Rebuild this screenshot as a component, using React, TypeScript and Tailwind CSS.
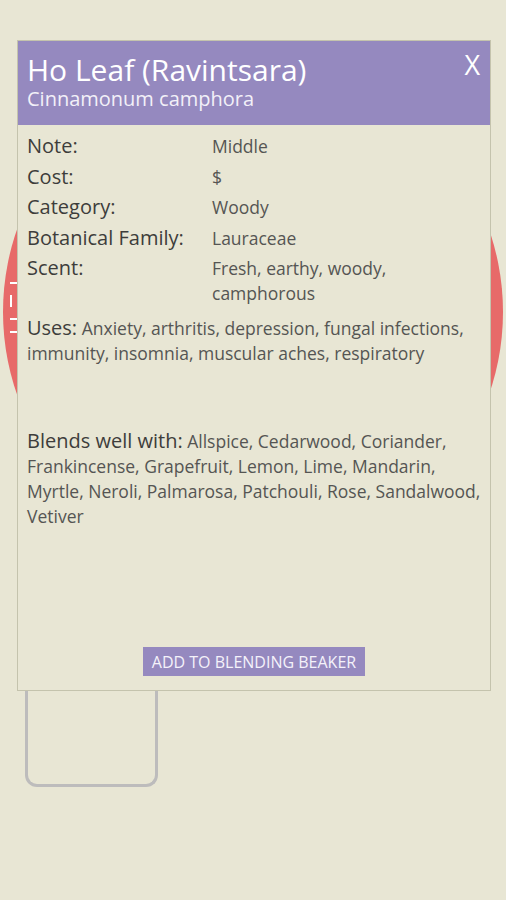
import React from "react";

const rows = [
  { label: "Note:", value: "Middle" },
  { label: "Cost:", value: "$" },
  { label: "Category:", value: "Woody" },
  { label: "Botanical Family:", value: "Lauraceae" },
  { label: "Scent:", value: "Fresh, earthy, woody, camphorous" },
];

export default function App() {
  return (
    <div
      className="relative h-[900px] w-full overflow-hidden bg-[#e8e6d4]"
      style={{ fontFamily: "'Open Sans', 'Noto Sans', sans-serif" }}
    >
      {/* page underneath */}
      <div className="flex flex-col">
        <div className="mt-[62px] ml-[3px] flex h-[500px] w-[500px] shrink-0 items-center rounded-full bg-[#e76a69]">
          <div className="ml-[7px] mt-[-10px] flex flex-col items-start gap-[11px]">
            <span className="block h-[2px] w-[7px] bg-white" />
            <span className="block h-[12px] w-[2px] bg-white" />
            <span className="block h-[2px] w-[7px] bg-white" />
            <span className="block h-[2px] w-[7px] bg-white" />
          </div>
        </div>
        <div className="mt-[120px] ml-[25px] h-[105px] w-[133px] rounded-b-[12px] border-[3px] border-t-0 border-[#bdbcbc]" />
      </div>

      {/* modal */}
      <div className="absolute left-[17px] top-[40px] flex h-[651px] w-[474px] flex-col border border-[#c4c3ad] bg-[#e8e6d4]">
        <div className="relative flex h-[84px] shrink-0 flex-col bg-[#9589bf] px-[9px] pt-[12px] text-white">
          <div className="text-[30px] leading-[34px]">Ho Leaf (Ravintsara)</div>
          <div className="text-[20px] leading-[24px] text-[#f2f0f8]">Cinnamonum camphora</div>
          <button className="absolute right-[10px] top-[8px] text-[27px] leading-[32px] text-white">X</button>
        </div>
        <div className="flex flex-1 flex-col px-[9px] pt-[8px] text-[#3d3d3b]">
          <div className="grid grid-cols-[185px_1fr] gap-y-[4.5px]">
            {rows.map((r) => (
              <React.Fragment key={r.label}>
                <div className="text-[20px] leading-[25px]">{r.label}</div>
                <div className="pt-[1px] text-[17.5px] leading-[25px] text-[#555553]">{r.value}</div>
              </React.Fragment>
            ))}
          </div>
          <div className="mt-[9px] text-[17.5px] leading-[25px] text-[#555553]">
            <span className="text-[20px] text-[#3d3d3b]">Uses:</span> Anxiety, arthritis, depression, fungal
            infections, immunity, insomnia, muscular aches, respiratory
          </div>
          <div className="mt-[62px] text-[17.5px] leading-[25px] text-[#555553]">
            <span className="text-[20px] text-[#3d3d3b]">Blends well with:</span> Allspice, Cedarwood,
            Coriander, Frankincense, Grapefruit, Lemon, Lime, Mandarin, Myrtle, Neroli, Palmarosa, Patchouli,
            Rose, Sandalwood, Vetiver
          </div>
          <div className="mt-auto mb-[14px] flex justify-center">
            <button className="h-[29px] w-[222px] bg-[#9589bf] text-[16px] text-[#f4f2fa]">
              ADD TO BLENDING BEAKER
            </button>
          </div>
        </div>
      </div>
    </div>
  );
}
